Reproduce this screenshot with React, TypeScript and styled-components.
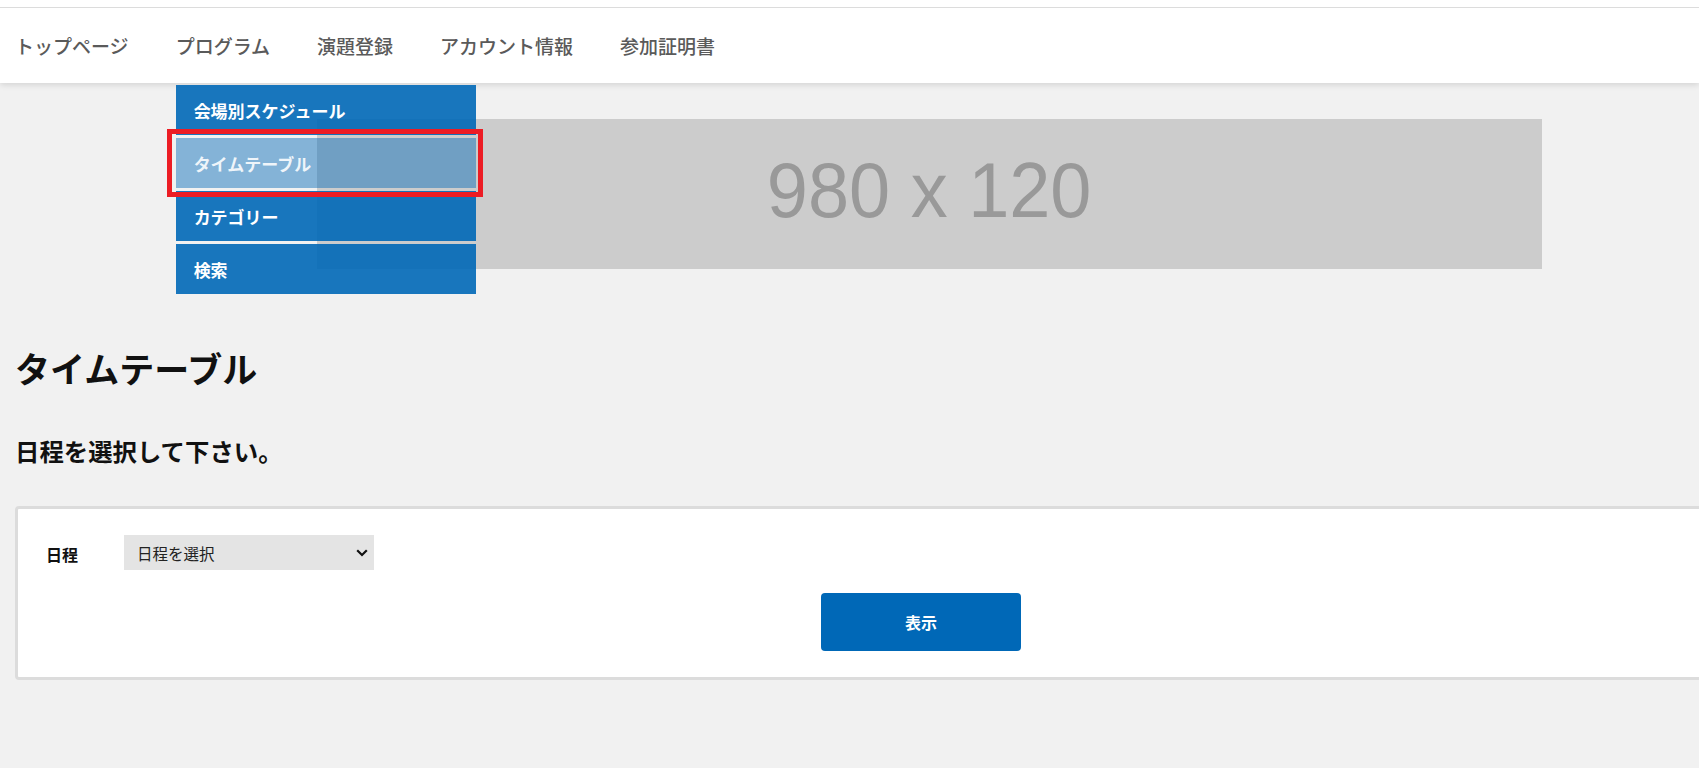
import styled, { createGlobalStyle } from 'styled-components';

const GlobalStyle = createGlobalStyle`
    html, body {
        margin: 0;
        padding: 0;
        background: #f1f1f1;
        overflow-x: hidden;
        font-family: "Noto Sans CJK JP", "Noto Sans", sans-serif;
    }
    * {
        box-sizing: border-box;
    }
`

const Header = styled.header`
    position: relative;
    z-index: 2;
    background: #fff;
    box-shadow: 0 2px 6px rgba(0, 0, 0, 0.12);
`
const TopStrip = styled.div`
    height: 8px;
    border-bottom: 1px solid #dcdcdc;
`
const NavList = styled.ul`
    display: flex;
    gap: 47px;
    margin: 0;
    padding: 0 0 0 15px;
    list-style: none;
    height: 75px;
`
const NavItem = styled.li`
    position: relative;
    display: flex;
    align-items: center;
    height: 100%;
    font-size: 19px;
    font-weight: 500;
    color: #5a5a5a;
    white-space: nowrap;
`
const Dropdown = styled.ul`
    position: absolute;
    top: 77px;
    left: 0;
    width: 300px;
    margin: 0;
    padding: 0;
    list-style: none;
`
const DropItem = styled.li<{ $active?: boolean }>`
    display: flex;
    align-items: center;
    height: 50px;
    margin-bottom: 3px;
    padding-left: 18px;
    font-size: 17px;
    font-weight: 700;
    color: ${p => (p.$active ? 'rgba(255, 255, 255, 0.88)' : '#fff')};
    background: ${p => (p.$active ? 'rgba(0, 104, 183, 0.45)' : 'rgba(0, 104, 183, 0.9)')};
`
const Marker = styled.div`
    position: absolute;
    left: -9px;
    top: 44px;
    width: 316px;
    height: 68px;
    border: 5px solid #ec1c24;
    pointer-events: none;
`

const Main = styled.main`
    padding: 0 0 0 15px;
`
const Banner = styled.div`
    display: flex;
    align-items: center;
    justify-content: center;
    width: 1225px;
    height: 150px;
    margin: 36px 0 0 302px;
    padding-bottom: 8px;
    background: #cccccc;
    color: #999999;
    font-family: "Liberation Sans", Arial, sans-serif;
    font-size: 77px;

    span {
        display: inline-block;
        transform: scaleX(0.96);
    }
`
const Title = styled.h1`
    margin: 75px 0 0;
    font-size: 35px;
    line-height: 48px;
    font-weight: 700;
    color: #111;
`
const Lead = styled.h2`
    margin: 42px 0 0;
    font-size: 24.4px;
    line-height: 34px;
    font-weight: 700;
    color: #111;
`
const Card = styled.section`
    width: 1812px;
    margin-top: 38px;
    padding: 26px 0 26px 28px;
    background: #fff;
    border: 3px solid #dcdcdc;
    border-radius: 4px;
`
const FieldRow = styled.div`
    display: flex;
    align-items: center;
    height: 35px;
`
const Label = styled.span`
    width: 78px;
    font-size: 16px;
    font-weight: 700;
    color: #111;
    padding-top: 2px;
`
const SelectWrap = styled.div`
    position: relative;
    width: 250px;
    height: 35px;
`
const Select = styled.select`
    appearance: none;
    width: 100%;
    height: 100%;
    border: none;
    border-radius: 0;
    background: #e4e4e4;
    padding: 0 0 0 13px;
    font-family: "Noto Sans CJK JP", sans-serif;
    font-size: 15.5px;
    color: #222;
    outline: none;
`
const Chevron = styled.svg`
    position: absolute;
    right: 6px;
    top: 14px;
    pointer-events: none;
`
const ButtonRow = styled.div`
    display: flex;
    justify-content: center;
    margin-top: 23px;
    padding-right: 28px;
`
const Submit = styled.button`
    width: 200px;
    height: 58px;
    border: none;
    border-radius: 4px;
    background: #0068b7;
    color: #fff;
    font-family: "Noto Sans CJK JP", sans-serif;
    font-size: 16px;
    font-weight: 700;
`

const navItems = ['トップページ', 'プログラム', '演題登録', 'アカウント情報', '参加証明書'];
const programMenu = ['会場別スケジュール', 'タイムテーブル', 'カテゴリー', '検索'];

export default function App() {
    return (
        <>
            <GlobalStyle />
            <Header>
                <TopStrip />
                <nav>
                    <NavList>
                        {navItems.map(item => (
                            <NavItem key={item}>
                                {item}
                                {item === 'プログラム' && (
                                    <Dropdown>
                                        {programMenu.map(sub => (
                                            <DropItem key={sub} $active={sub === 'タイムテーブル'}>{sub}</DropItem>
                                        ))}
                                        <Marker />
                                    </Dropdown>
                                )}
                            </NavItem>
                        ))}
                    </NavList>
                </nav>
            </Header>
            <Main>
                <Banner><span>980 x 120</span></Banner>
                <Title>タイムテーブル</Title>
                <Lead>日程を選択して下さい。</Lead>
                <Card>
                    <FieldRow>
                        <Label>日程</Label>
                        <SelectWrap>
                            <Select defaultValue="">
                                <option value="">日程を選択</option>
                            </Select>
                            <Chevron width="12" height="8" viewBox="0 0 12 8">
                                <polyline points="1.2,1.2 6,6 10.8,1.2" fill="none" stroke="#111" strokeWidth="2.2" />
                            </Chevron>
                        </SelectWrap>
                    </FieldRow>
                    <ButtonRow>
                        <Submit>表示</Submit>
                    </ButtonRow>
                </Card>
            </Main>
        </>
    );
}
